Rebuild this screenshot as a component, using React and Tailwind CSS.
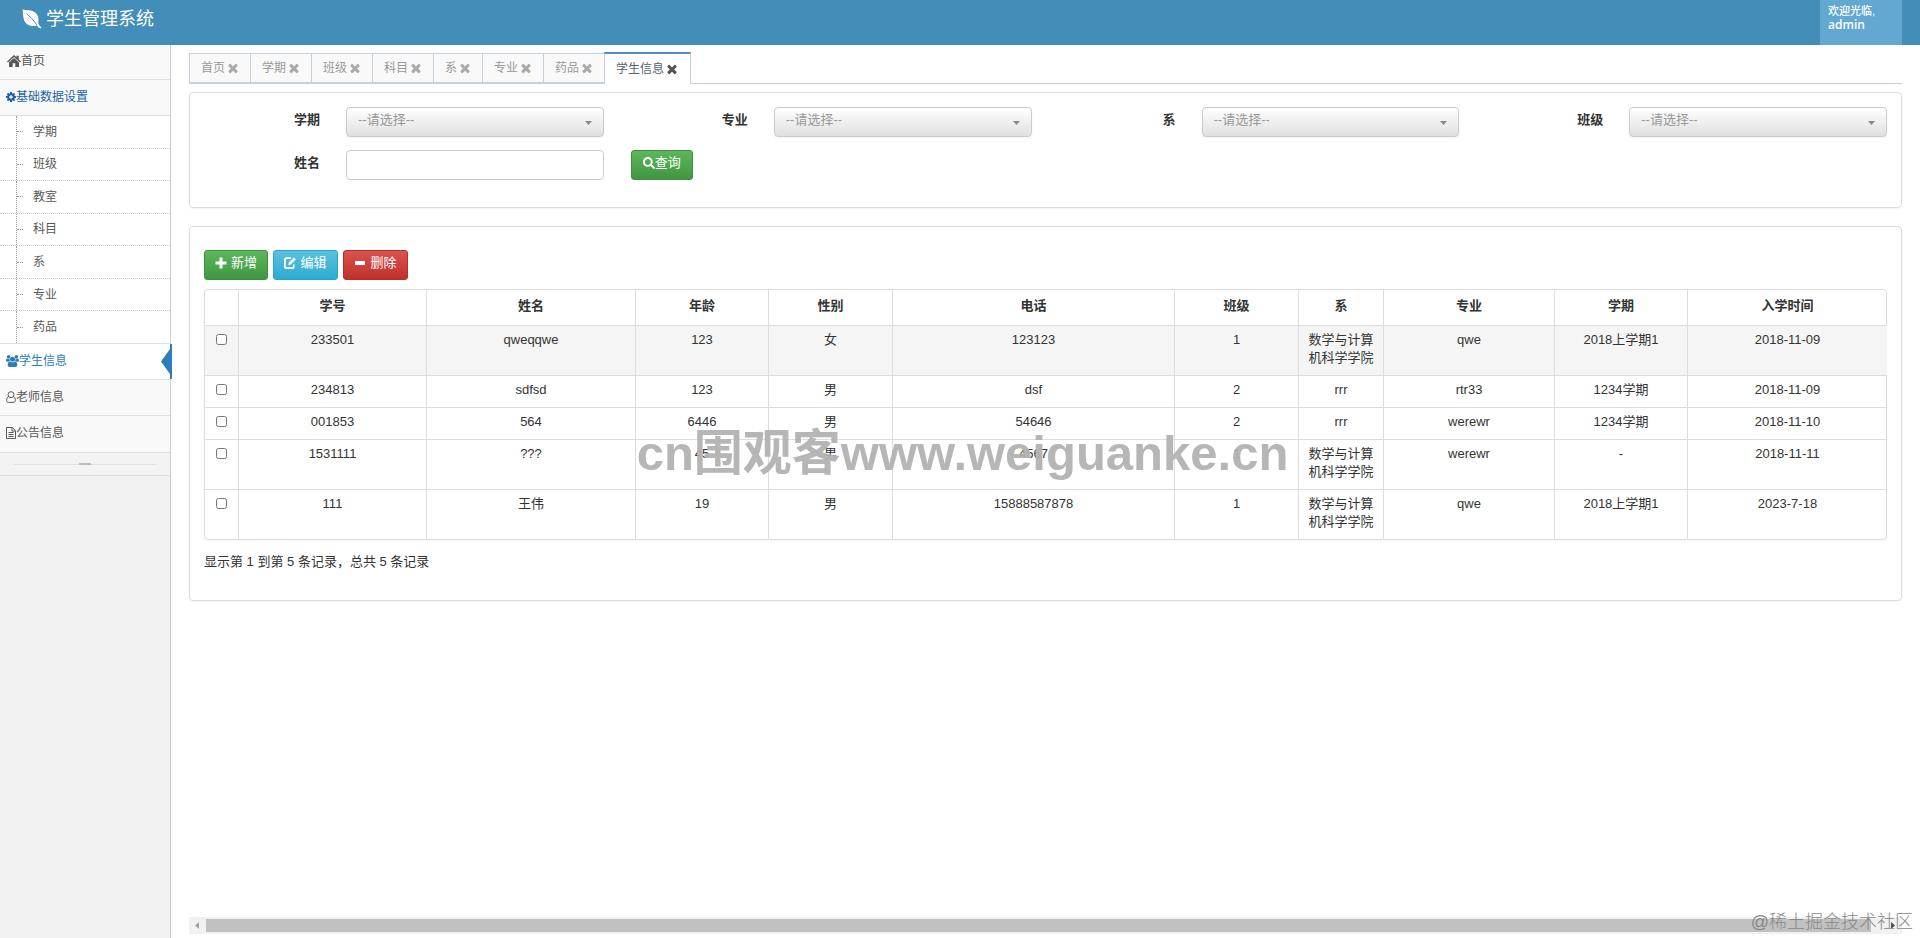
import { FaSearch } from 'react-icons/fa'

const subMenu = ['学期', '班级', '教室', '科目', '系', '专业', '药品']

const tabs = ['首页', '学期', '班级', '科目', '系', '专业', '药品', '学生信息']

const filters = [
  { id: 'term', label: '学期' },
  { id: 'major', label: '专业' },
  { id: 'department', label: '系' },
  { id: 'clazz', label: '班级' },
]

const columns = [
  { title: '学号', width: 'w-[188px]' },
  { title: '姓名', width: 'w-[209px]' },
  { title: '年龄', width: 'w-[133px]' },
  { title: '性别', width: 'w-[124px]' },
  { title: '电话', width: 'w-[282px]' },
  { title: '班级', width: 'w-[124px]' },
  { title: '系', width: 'w-[85px]' },
  { title: '专业', width: 'w-[171px]' },
  { title: '学期', width: 'w-[133px]' },
  { title: '入学时间', width: 'w-[199px]' },
]

const students = [
  ['233501', 'qweqqwe', '123', '女', '123123', '1', '数学与计算机科学学院', 'qwe', '2018上学期1', '2018-11-09'],
  ['234813', 'sdfsd', '123', '男', 'dsf', '2', 'rrr', 'rtr33', '1234学期', '2018-11-09'],
  ['001853', '564', '6446', '男', '54646', '2', 'rrr', 'werewr', '1234学期', '2018-11-10'],
  ['1531111', '???', '45', '男', '4567', '1', '数学与计算机科学学院', 'werewr', '-', '2018-11-11'],
  ['111', '王伟', '19', '男', '15888587878', '1', '数学与计算机科学学院', 'qwe', '2018上学期1', '2023-7-18'],
]

function LeafIcon() {
  return (
    <svg className="size-5" viewBox="0 0 20 20" fill="#fff" aria-hidden="true">
      <path d="M0.5 0.5C4 1.6 8 0.8 11.5 2.4C15.8 4.4 17.2 8.6 16.2 14.2C17 16 18.2 17.6 19.5 18.4L18.6 19.5C17 18.8 15.8 17.8 14.8 16.6C10 17.8 5.4 16.8 3 13C0.8 9.4 1.4 4.6 0.5 0.5Z" />
      <path d="M4.5 4.5C8 7.6 11.5 11.2 14.8 15.8" fill="none" stroke="#438eb9" strokeWidth="1" />
    </svg>
  )
}

function HomeIcon() {
  return (
    <svg className="h-3 w-3.5" viewBox="0 0 14 12" fill="currentColor" aria-hidden="true">
      <path d="M7 0L9.5 2.300V0.700H11.700V4.300L14 6.400L13.100 7.400L7 1.900L0.900 7.400L0 6.400Z" />
      <path d="M7 2.900L12 7.300V12H8.300V8.300H5.700V12H2V7.300Z" />
    </svg>
  )
}

function CogIcon() {
  return (
    <svg className="size-2.5" viewBox="128 128 1536 1536" fill="currentColor" aria-hidden="true">
      <path d="M1152 896q0-106-75-181t-181-75-181 75-75 181 75 181 181 75 181-75 75-181zm512-109v222q0 12-8 23t-20 13l-185 28q-19 54-39 91 35 50 107 138 10 12 10 25t-9 23q-27 37-99 108t-94 71q-12 0-26-9l-138-108q-44 23-91 38-16 136-29 186-7 28-36 28h-222q-14 0-24.5-8.5t-11.5-21.5l-28-184q-49-16-90-37l-141 107q-10 9-25 9-14 0-25-11-126-114-165-168-7-10-7-23 0-12 8-23 15-21 51-66.5t54-70.5q-27-50-41-99l-183-27q-13-2-21-12.5t-8-23.5v-222q0-12 8-23t19-13l186-28q14-46 39-92-40-57-107-138-10-12-10-24 0-10 9-23 26-36 98.5-107.5t94.5-71.5q13 0 26 10l138 107q44-23 91-38 16-136 29-186 7-28 36-28h222q14 0 24.5 8.5t11.5 21.5l28 184q49 16 90 37l142-107q9-9 24-9 13 0 25 10 129 119 165 170 7 8 7 22 0 12-8 23-15 21-51 66.5t-54 70.5q26 50 41 98l183 28q13 2 21 12.5t8 23.5z" />
    </svg>
  )
}

function UsersIcon() {
  return (
    <svg className="h-3 w-[13px]" viewBox="0 0 1920 1792" fill="currentColor" aria-hidden="true">
      <path d="M593 896q-162 5-265 128h-134q-82 0-138-40.5t-56-118.5q0-353 124-353 6 0 43.5 21t97.5 42.5 119 21.5q67 0 133-23-5 37-5 66 0 139 81 256zm1071 637q0 120-73 189.5t-194 69.5h-874q-121 0-194-69.5t-73-189.5q0-53 3.5-103.5t14-109 26.5-108.5 43-97.5 62-81 85.5-53.5 111.5-20q10 0 43 21.5t73 48 107 48 135 21.5 135-21.5 107-48 73-48 43-21.5q61 0 111.5 20t85.5 53.5 62 81 43 97.5 26.5 108.5 14 109 3.5 103.5zm-1024-1277q0 106-75 181t-181 75-181-75-75-181 75-181 181-75 181 75 75 181zm704 384q0 159-112.5 271.5t-271.5 112.5-271.5-112.5-112.5-271.5 112.5-271.5 271.5-112.5 271.5 112.5 112.5 271.5zm576 225q0 78-56 118.5t-138 40.5h-134q-103-123-265-128 81-117 81-256 0-29-5-66 66 23 133 23 59 0 119-21.5t97.5-42.5 43.5-21q124 0 124 353zm-128-609q0 106-75 181t-181 75-181-75-75-181 75-181 181-75 181 75 75 181z" />
    </svg>
  )
}

function UserIcon() {
  return (
    <svg className="h-3 w-2.5" viewBox="0 0 10 12" fill="none" stroke="currentColor" aria-hidden="true">
      <circle cx="5" cy="3.7" r="3" />
      <path d="M2.600 5.700C1.200 6.200 0.600 7.600 0.600 9.400C0.600 10.700 1.300 11.400 2.400 11.400H7.600C8.700 11.400 9.400 10.700 9.400 9.400C9.400 7.600 8.800 6.200 7.400 5.700" />
    </svg>
  )
}

function FileIcon() {
  return (
    <svg className="h-3 w-2.5" viewBox="0 0 10 12" fill="none" stroke="currentColor" aria-hidden="true">
      <path d="M0.500 0.500H6.300L9.500 3.700V11.500H0.500ZM6 0.500V4H9.500M2.500 5.500H7.500M2.500 7.500H7.500M2.500 9.500H7.500" />
    </svg>
  )
}

function TimesIcon() {
  return (
    <svg className="size-3.5" viewBox="0 0 1792 1792" fill="currentColor" aria-hidden="true">
      <path d="M1490 1322q0 40-28 68l-136 136q-28 28-68 28t-68-28l-294-294-294 294q-28 28-68 28t-68-28l-136-136q-28-28-28-68t28-68l294-294-294-294q-28-28-28-68t28-68l136-136q28-28 68-28t68 28l294 294 294-294q28-28 68-28t68 28l136 136q28 28 28 68t-28 68l-294 294 294 294q28 28 28 68z" />
    </svg>
  )
}

function PlusIcon() {
  return (
    <svg className="size-3" viewBox="0 0 12 12" fill="currentColor" aria-hidden="true">
      <path d="M4.5 0.5h3v4h4v3h-4v4h-3v-4h-4v-3h4z" />
    </svg>
  )
}

function EditIcon() {
  return (
    <svg className="size-3" viewBox="0 0 12 12" fill="none" stroke="currentColor" aria-hidden="true">
      <path d="M7 1.200H2.500Q0.900 1.200 0.900 2.800V9.400Q0.900 11 2.500 11H8.200Q9.800 11 9.800 9.400V7.500" strokeWidth="1.8" />
      <path d="M4.300 8.200L4.900 5.600L10 0.400L11.900 2.300L6.800 7.500Z" fill="currentColor" stroke="none" />
    </svg>
  )
}

function MinusIcon() {
  return (
    <svg className="size-3" viewBox="0 0 12 12" fill="currentColor" aria-hidden="true">
      <rect x="1" y="4" width="10" height="4" rx="0.5" />
    </svg>
  )
}

function Header() {
  return (
    <header className="flex h-[45px] items-stretch justify-between bg-[#438eb9] pr-[18px] pl-[22px] text-white">
      <a href="#" className="flex items-start gap-1 pt-[9px]">
        <LeafIcon />
        <span className="text-lg leading-5">学生管理系统</span>
      </a>
      <a href="#" className="w-[82px] bg-[#62a8d1] px-2 pt-1 text-[11px] leading-[14px] font-medium">
        欢迎光临,
        <br />
        <span className="font-['Open_Sans'] text-xs leading-[14px] font-semibold">admin</span>
      </a>
    </header>
  )
}

function Sidebar() {
  return (
    <nav className="w-[171px] shrink-0 border-r border-[#ccc] bg-[#f2f2f2] text-xs text-[#585858]">
      <a href="#" className="flex h-[35px] items-center border-b border-[#e0e0e0] bg-[#f9f9f9] pb-0.5 pl-[7px]">
        <HomeIcon />
        首页
      </a>
      <a href="#" className="flex h-9 items-center border-b border-[#e0e0e0] bg-[#f9f9f9] pb-0.5 pl-1.5 text-[#1963aa]">
        <CogIcon />
        基础数据设置
      </a>
      <ul className="grid h-[228px] auto-rows-fr bg-white">
        {subMenu.map((item) => (
          <li key={item} className="flex border-b border-dotted border-[#c5ccd0] last:border-solid last:border-[#e0e0e0]">
            <a href="#" className="ml-4 flex flex-1 items-center gap-2.5 border-l border-dotted border-[#999]">
              <span className="w-1.5 border-t border-dotted border-[#999]"></span>
              {item}
            </a>
          </li>
        ))}
      </ul>
      <a href="#" className="relative flex h-9 items-center border-b border-[#e0e0e0] bg-white pb-0.5 pl-1.5 text-[#2b7dbc]">
        <UsersIcon />
        学生信息
        <svg className="absolute top-0 -right-0.5 h-9 w-[11px]" viewBox="0 0 11 36" fill="#2b7dbc" aria-hidden="true">
          <path d="M9 5v25L0 17.500zM9 0h2v35H9z" />
        </svg>
      </a>
      <a href="#" className="flex h-9 items-center border-b border-[#e0e0e0] bg-[#f9f9f9] pb-0.5 pl-1.5">
        <UserIcon />
        老师信息
      </a>
      <a href="#" className="flex h-[37px] items-center border-b border-[#e0e0e0] bg-[#f9f9f9] pb-0.5 pl-1.5">
        <FileIcon />
        公告信息
      </a>
      <div className="flex h-[23px] items-center border-b border-[#e0e0e0] bg-[#f3f3f3] px-3.5">
        <span className="h-px flex-1 bg-[#e0e0e0]"></span>
        <button type="button" aria-label="收起菜单" className="h-0.5 w-3 bg-[#bbb]"></button>
        <span className="h-px flex-1 bg-[#e0e0e0]"></span>
      </div>
    </nav>
  )
}

function Tabs() {
  return (
    <ul className="flex items-end border-b border-[#c5d0dc] pt-[7px] text-xs">
      {tabs.map((tab, i) => {
        const active = i === tabs.length - 1
        return (
          <li
            key={tab}
            className={
              active
                ? '-mb-px flex h-8 items-center gap-px border-x border-t-2 border-x-[#c5d0dc] border-t-[#4c8fbd] bg-white px-[11px] text-[#576373]'
                : 'flex h-[30px] items-center gap-px border-y border-l border-[#c5d0dc] bg-[#f9f9f9] pr-2.5 pl-[11px] text-[#999]'
            }
          >
            <a href="#">{tab}</a>
            <button type="button" aria-label={`关闭${tab}`} className={active ? 'text-[#555]' : 'text-[#aaa]'}>
              <TimesIcon />
            </button>
          </li>
        )
      })}
    </ul>
  )
}

function SearchPanel() {
  return (
    <form
      className="mt-2 grid grid-cols-4 gap-y-[13px] rounded border border-[#ddd] pt-3.5 pb-[27px] text-[13px] text-[#333] shadow-xs"
      onSubmit={(e) => e.preventDefault()}
    >
      {filters.map((f) => (
        <div key={f.id} className="flex items-start gap-[26px] pr-3.5">
          <label htmlFor={f.id} className="w-[130px] shrink-0 pt-[3px] text-right leading-5 font-bold">{f.label}</label>
          <div className="relative flex-1">
            <select
              id={f.id}
              className="block h-[30px] w-full appearance-none rounded border border-[#ccc] bg-linear-to-b from-white to-[#e0e0e0] pb-1 pl-[11px] text-[13px] text-[#999] shadow-xs"
            >
              <option>--请选择--</option>
            </select>
            <svg className="pointer-events-none absolute top-3.5 right-3 h-1 w-[7px]" viewBox="0 0 7 4" fill="#888" aria-hidden="true">
              <path d="M0 0h7L3.5 4z" />
            </svg>
          </div>
        </div>
      ))}
      <div className="flex items-start gap-[26px] pr-3.5">
        <label htmlFor="name" className="w-[130px] shrink-0 pt-[3px] text-right leading-5 font-bold">姓名</label>
        <input id="name" type="text" className="h-[30px] min-w-0 flex-1 rounded border border-[#ccc] bg-white px-3" />
      </div>
      <div className="pl-[13px]">
        <button
          type="submit"
          className="flex h-[30px] w-[62px] items-center justify-center rounded-[3px] border border-[#3e8f3e] bg-linear-to-b from-[#5cb85c] to-[#419641] pb-1 text-white"
        >
          <FaSearch className="size-3" />
          查询
        </button>
      </div>
    </form>
  )
}

function StudentPanel() {
  return (
    <section className="mt-[18px] rounded border border-[#ddd] px-3.5 pt-[23px] pb-7 text-[13px] text-[#333] shadow-xs">
      <div className="flex gap-[5px] text-white">
        <button type="button" className="flex h-[30px] w-16 items-center justify-center gap-1 rounded-[3px] border border-[#3e8f3e] bg-linear-to-b from-[#5cb85c] to-[#419641] pb-1">
          <PlusIcon />
          新增
        </button>
        <button type="button" className="flex h-[30px] w-[65px] items-center justify-center gap-1 rounded-[3px] border border-[#28a4c9] bg-linear-to-b from-[#5bc0de] to-[#2aabd2] pb-1">
          <EditIcon />
          编辑
        </button>
        <button type="button" className="flex h-[30px] w-[65px] items-center justify-center gap-1 rounded-[3px] border border-[#b92c28] bg-linear-to-b from-[#d9534f] to-[#c12e2a] pb-1">
          <MinusIcon />
          删除
        </button>
      </div>

      <div className="relative mt-[9px] rounded border border-[#ddd] shadow-xs">
        <table className="w-full table-fixed border-separate border-spacing-0 text-center leading-[18px]">
          <thead>
            <tr>
              <th className="w-[34px] border-r border-b border-[#ddd]"></th>
              {columns.map((c) => (
                <th key={c.title} className={`${c.width} h-9 border-r border-b border-[#ddd] pb-1 font-bold last:border-r-0`}>
                  {c.title}
                </th>
              ))}
            </tr>
          </thead>
          <tbody>
            {students.map((row) => (
              <tr key={row[0]} className="group align-top first:bg-[#f5f5f5]">
                <td className="border-r border-b border-[#ddd] pt-2 group-last:border-b-0">
                  <input type="checkbox" aria-label={`选择 ${row[0]}`} className="mx-auto block size-[11px]" />
                </td>
                {row.map((cell, i) => (
                  <td key={i} className="border-r border-b border-[#ddd] px-2 pt-[5px] pb-2 group-last:border-b-0 last:border-r-0">
                    {cell}
                  </td>
                ))}
              </tr>
            ))}
          </tbody>
        </table>
        {/* site watermark, centred on the page rather than on the table */}
        <div className="pointer-events-none absolute inset-x-0 top-[133px] pr-[166px] text-center text-[49px] leading-[60px] font-bold whitespace-nowrap text-[#b2b2b2]/95">
          cn围观客www.weiguanke.cn
        </div>
      </div>

      <p className="mt-3 leading-5">显示第 1 到第 5 条记录，总共 5 条记录</p>
    </section>
  )
}

function Scrollbar() {
  return (
    <div className="mt-auto mb-1 flex h-[17px] items-center bg-[#f1f1f1]">
      <svg className="h-[17px] w-[17px]" viewBox="0 0 17 17" fill="#a3a3a3" aria-hidden="true">
        <path d="M10 5v7L6 8.500z" />
      </svg>
      <div className="h-[13px] flex-1 bg-[#c1c1c1]"></div>
      <div className="flex w-[31px] justify-end">
        <svg className="h-[17px] w-[17px]" viewBox="0 0 17 17" fill="#505050" aria-hidden="true">
          <path d="M6 5v7l4-3.500z" />
        </svg>
      </div>
    </div>
  )
}

export default function App() {
  return (
    <div className="relative flex min-h-screen flex-col bg-white font-['Liberation_Sans','Noto_Sans_CJK_SC',sans-serif]">
      <Header />
      <div className="flex flex-1">
        <Sidebar />
        <main className="flex min-w-0 flex-1 flex-col px-[18px]">
          <Tabs />
          <SearchPanel />
          <StudentPanel />
          <Scrollbar />
        </main>
      </div>
      <div className="pointer-events-none absolute right-[7px] bottom-1 text-lg leading-6 font-light text-[#888]">@稀土掘金技术社区</div>
    </div>
  )
}
